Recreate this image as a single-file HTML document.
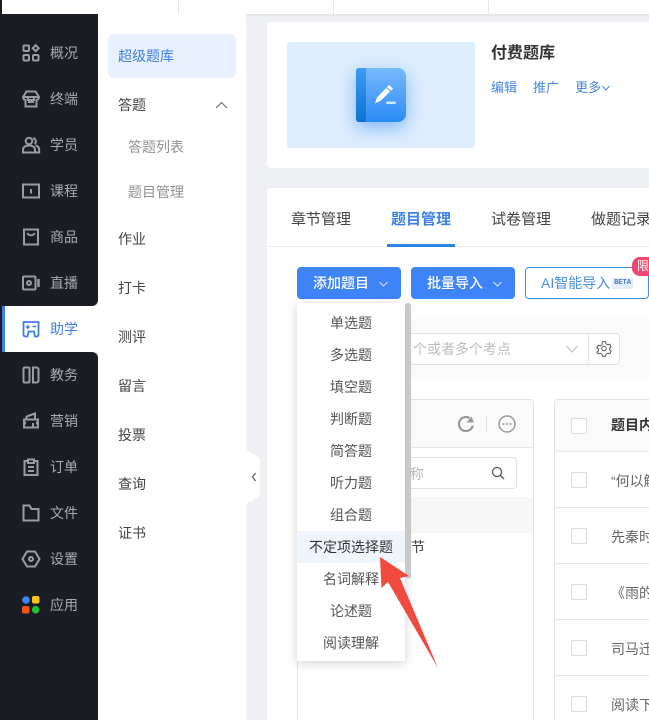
<!DOCTYPE html>
<html lang="zh-CN">
<head>
<meta charset="utf-8">
<title>题目管理</title>
<style>
*{box-sizing:border-box;margin:0;padding:0}
html,body{width:649px;height:720px;overflow:hidden;background:#eff0f3}
body{position:relative;font-family:"Liberation Sans","Noto Sans CJK SC",sans-serif;font-size:14px;color:#444}
.a{position:absolute}
.t{position:absolute;line-height:20px;height:20px;white-space:nowrap}
svg{position:absolute;overflow:visible}
.n{left:50px;color:#a9aaad;font-size:14px}
.ic{left:22px;width:18px;height:18px;fill:none;stroke:#9b9c9f;stroke-width:2}
.m{left:118px;color:#444}
.s{left:128px;color:#929292}
.dd{left:297px;width:108px;text-align:center;color:#555;font-size:14px}
.cb{position:absolute;left:571px;width:16px;height:16px;border:1px solid #dcdcdc;border-radius:2px;background:#fff}
.hl{position:absolute;left:555px;width:94px;height:1px;background:#e6e6e6}
.r{left:611px;color:#666;width:38px;overflow:hidden}
</style>
</head>
<body>
<!-- top bar -->
<div class="a" style="left:0;top:0;width:649px;height:14px;background:#fff;box-shadow:0 1px 3px rgba(0,0,0,.08)"></div>
<div class="a" style="left:178px;top:0;width:1px;height:14px;background:#e8e8e8"></div>
<div class="a" style="left:333px;top:0;width:1px;height:14px;background:#e8e8e8"></div>
<div class="a" style="left:488px;top:0;width:1px;height:14px;background:#e8e8e8"></div>

<!-- left strip and sidebar -->
<div class="a" style="left:0;top:0;width:2px;height:720px;background:#1b1d24"></div>
<div class="a" style="left:98px;top:14px;width:148px;height:706px;background:#fff"></div>
<div class="a" style="left:2px;top:14px;width:96px;height:292px;background:#1b1d24;border-bottom-right-radius:6px"></div>
<div class="a" style="left:2px;top:306px;width:96px;height:46px;background:#fff;border-left:3px solid #3f7fe8"></div>
<div class="a" style="left:2px;top:352px;width:96px;height:368px;background:#1b1d24;border-top-right-radius:6px"></div>

<!-- sidebar icons -->
<svg class="ic" style="top:44px" viewBox="0 0 18 18"><rect x="1.500" y="1.500" width="5.500" height="5.500" rx="1"/><rect x="1.500" y="11" width="5.500" height="5.500" rx="1"/><rect x="11" y="11" width="5.500" height="5.500" rx="1"/><path d="M13.700 1.200l3 3-3 3-3-3z"/></svg>
<svg class="ic" style="top:90px" viewBox="0 0 18 18"><path d="M4.500 1.500h9L17 7c0 2-1.500 3-2.500 3v6.500h-11V10C2.500 10 1 9 1 7zM1.500 7h15M6 12h6M6 7v3h6V7"/></svg>
<svg class="ic" style="top:136px" viewBox="0 0 18 18"><circle cx="7" cy="5" r="3.300"/><path d="M11 2.200a3.200 3.200 0 0 1 1.500 5.800M1 16.500v-2.500c0-3 2.500-4.500 6-4.500s6 1.500 6 4.500v2.500zM13.500 9.500c2.300.5 3.700 2 3.700 4v3H13"/></svg>
<svg class="ic" style="top:182px" viewBox="0 0 18 18"><path d="M1 2.500h16v13H1zM9 7v4.500"/></svg>
<svg class="ic" style="top:228px" viewBox="0 0 18 18"><path d="M2 1.500h14v15H2zM5.500 5c.5 3 6.500 3 7 0"/></svg>
<svg class="ic" style="top:274px" viewBox="0 0 18 18"><rect x="1" y="2.500" width="12.500" height="13" rx="1"/><circle cx="7" cy="9" r="2"/><path d="M16.500 5v8" stroke-width="2.500"/></svg>
<svg class="ic" style="top:320px;stroke:#3f7fe8" viewBox="0 0 18 18"><path d="M1.500 2h15v12.500q0 2-2 2h-1.500l-1-5H6.500l-1 5H4q-2.500 0-2.500-2z" stroke-width="1.800"/><path d="M3.800 7h4M5.800 5v4M10.500 6.500h3.500" stroke-width="1.500"/></svg>
<svg class="ic" style="top:366px" viewBox="0 0 18 18"><rect x="1.500" y="1.500" width="6" height="15" rx="1"/><path d="M11 1.500h3.500c1.200 0 2 .8 2 2v11c0 1.200-.8 2-2 2H11z"/></svg>
<svg class="ic" style="top:412px" viewBox="0 0 18 18"><path d="M2 7.500h14v2.500c-1.500 0-1.500 2 0 2v3.500H2V12c1.500 0 1.500-2 0-2zM4 7.500c0-2 .5-3 2-3.500L13 1.500V7.500M11 11v4.500"/></svg>
<svg class="ic" style="top:458px" viewBox="0 0 18 18"><path d="M6 3H2.500v14h13V3H12M6 1.500h6v3.500H6zM6 9h6M6 13h6"/></svg>
<svg class="ic" style="top:504px" viewBox="0 0 18 18"><path d="M1.500 1.500h6l2 3.500h7v11.500h-15z"/></svg>
<svg class="ic" style="top:550px" viewBox="0 0 18 18"><path d="M5 1.500h8L17.500 9 13 16.500H5L.5 9z"/><circle cx="9" cy="9" r="2"/></svg>
<svg style="left:22px;top:596px;width:18px;height:18px" viewBox="0 0 18 18"><circle cx="4" cy="4" r="3.800" fill="#3d84f7"/><rect x="10" y="0" width="7.500" height="7.500" rx="2" fill="#f9c513"/><rect x="0" y="10" width="7.500" height="7.500" rx="2" fill="#f4511e"/><circle cx="13.700" cy="13.700" r="3.800" fill="#1fc12e"/></svg>

<div class="t n" style="top:43px">概况</div>
<div class="t n" style="top:89px">终端</div>
<div class="t n" style="top:135px">学员</div>
<div class="t n" style="top:181px">课程</div>
<div class="t n" style="top:227px">商品</div>
<div class="t n" style="top:273px">直播</div>
<div class="t n" style="top:319px;color:#3f7fe8">助学</div>
<div class="t n" style="top:365px">教务</div>
<div class="t n" style="top:411px">营销</div>
<div class="t n" style="top:457px">订单</div>
<div class="t n" style="top:503px">文件</div>
<div class="t n" style="top:549px">设置</div>
<div class="t n" style="top:595px">应用</div>

<!-- secondary menu -->
<div class="a" style="left:108px;top:34px;width:128px;height:44px;background:#e9f1fe;border-radius:6px"></div>
<div class="t m" style="top:46px;color:#3f7fe8">超级题库</div>
<div class="t m" style="top:95px">答题</div>
<svg style="left:215px;top:101px;width:13px;height:8px" viewBox="0 0 13 8"><path d="M1 7l5.500-5.500L12 7" fill="none" stroke="#666" stroke-width="1"/></svg>
<div class="t s" style="top:137px">答题列表</div>
<div class="t s" style="top:182px">题目管理</div>
<div class="t m" style="top:229px">作业</div>
<div class="t m" style="top:278px">打卡</div>
<div class="t m" style="top:327px">测评</div>
<div class="t m" style="top:376px">留言</div>
<div class="t m" style="top:425px">投票</div>
<div class="t m" style="top:474px">查询</div>
<div class="t m" style="top:523px">证书</div>

<!-- collapse handle -->
<svg style="left:246px;top:450px;width:14px;height:54px" viewBox="0 0 14 54"><path d="M0 0L14 8V46L0 54z" fill="#fff"/><path d="M9.500 23l-3 4 3 4" fill="none" stroke="#666" stroke-width="1.300"/></svg>

<!-- card 1 -->
<div class="a" style="left:267px;top:22px;width:390px;height:146px;background:#fff;border-radius:4px"></div>
<div class="a" style="left:287px;top:42px;width:188px;height:106px;background:#deeeff;border-radius:3px"></div>
<div class="a" style="left:356px;top:68px;width:50px;height:54px;border-radius:3px 8px 8px 3px;background:linear-gradient(180deg,#79b9ff,#2a8cf5);box-shadow:0 6px 18px rgba(40,130,240,.5);overflow:hidden">
  <div class="a" style="left:0;top:0;width:10px;height:54px;background:linear-gradient(180deg,#3d9bf5,#0f72cf)"></div>
</div>
<svg style="left:375px;top:85px;width:22px;height:20px" viewBox="0 0 22 20"><path d="M14 0l4 3.500L6 15.500l-6 3 2-6z" fill="#fff"/><path d="M11.500 2.500l4 3.500" stroke="#4c9df8" stroke-width="1"/><rect x="11" y="16.500" width="10" height="2.500" rx="1.200" fill="#cfe6ff"/></svg>
<div class="t" style="left:491px;top:44px;font-size:16px;font-weight:700;color:#333">付费题库</div>
<div class="t" style="left:491px;top:78px;font-size:13px;color:#4a86e0">编辑</div>
<div class="t" style="left:533px;top:78px;font-size:13px;color:#4a86e0">推广</div>
<div class="t" style="left:575px;top:78px;font-size:13px;color:#4a86e0">更多</div>
<svg style="left:602px;top:85px;width:8px;height:6px" viewBox="0 0 8 6"><path d="M.5 1l3.500 4L7.500 1" fill="none" stroke="#4a86e0" stroke-width="1"/></svg>

<!-- card 2 -->
<div class="a" style="left:267px;top:188px;width:390px;height:540px;background:#fff;border-radius:4px"></div>
<div class="t" style="left:291px;top:210px;font-size:15px;color:#444">章节管理</div>
<div class="t" style="left:391px;top:210px;font-size:15px;color:#3f7fe8;font-weight:700">题目管理</div>
<div class="t" style="left:491px;top:210px;font-size:15px;color:#444">试卷管理</div>
<div class="t" style="left:591px;top:210px;font-size:15px;color:#444">做题记录</div>
<div class="a" style="left:267px;top:246px;width:382px;height:1px;background:#ececec"></div>
<div class="a" style="left:387px;top:244px;width:68px;height:3px;background:#2b85e4"></div>

<!-- buttons -->
<div class="a" style="left:297px;top:267px;width:104px;height:32px;background:#3f83f8;border-radius:4px"></div>
<div class="t" style="left:313px;top:273px;color:#fff;font-weight:500">添加题目</div>
<svg style="left:379px;top:281px;width:9px;height:6px" viewBox="0 0 9 6"><path d="M.5 1L4.500 5 8.500 1" fill="none" stroke="#d5e4fe" stroke-width="1"/></svg>
<div class="a" style="left:411px;top:267px;width:104px;height:32px;background:#3f83f8;border-radius:4px"></div>
<div class="t" style="left:427px;top:273px;color:#fff;font-weight:500">批量导入</div>
<svg style="left:493px;top:281px;width:9px;height:6px" viewBox="0 0 9 6"><path d="M.5 1L4.500 5 8.500 1" fill="none" stroke="#d5e4fe" stroke-width="1"/></svg>
<div class="a" style="left:525px;top:267px;width:124px;height:32px;background:#fff;border:1px solid #3f8fe0;border-radius:4px"></div>
<div class="t" style="left:541px;top:273px;color:#4a8fe0">AI智能导入</div>
<div class="a" style="left:612px;top:278px;width:21px;height:11px;background:#e3edfb;color:#4a80c0;font-size:7px;font-weight:700;line-height:11px;text-align:center;font-family:'Liberation Mono',monospace">BETA</div>
<div class="a" style="left:632px;top:257px;width:30px;height:19px;background:#f0476e;border-radius:8px 8px 0 8px;color:#fff;font-size:12px;line-height:19px;padding-left:5px;white-space:nowrap">限时</div>

<!-- filter -->
<div class="a" style="left:297px;top:319px;width:352px;height:59px;background:#fafafa"></div>
<div class="a" style="left:380px;top:333px;width:209px;height:32px;background:#fff;border:1px solid #e2e2e2"></div>
<div class="t" style="left:413px;top:339px;color:#bdbdbd">个或者多个考点</div>
<svg style="left:566px;top:345px;width:12px;height:8px" viewBox="0 0 12 8"><path d="M.5 1L6 7l5.500-6" fill="none" stroke="#bbb" stroke-width="1"/></svg>
<div class="a" style="left:588px;top:333px;width:32px;height:32px;background:#fff;border:1px solid #e2e2e2;border-radius:0 4px 4px 0"></div>
<svg style="left:597px;top:341px;width:14px;height:15px" viewBox="0 0 14 15"><path d="M5.500.8h3l.5 2 1.800 1 2-.6 1.300 2.600-1.500 1.400v1.600l1.500 1.400-1.300 2.600-2-.6-1.800 1-.5 2h-3l-.5-2-1.800-1-2 .6L-.1 11.200 1.400 9.800V8.200L-.1 6.800 1.200 4.200l2 .6 1.800-1z" fill="none" stroke="#555" stroke-width="1"/><circle cx="7" cy="7.500" r="2.200" fill="none" stroke="#555" stroke-width="1"/></svg>

<!-- tree panel -->
<div class="a" style="left:297px;top:399px;width:237px;height:330px;background:#fff;border:1px solid #e2e2e2;border-radius:4px"></div>
<div class="a" style="left:298px;top:400px;width:235px;height:48px;background:#fafafa;border-bottom:1px solid #e6e6e6;border-radius:4px 4px 0 0"></div>
<svg style="left:458px;top:416px;width:16px;height:16px" viewBox="0 0 16 16"><path d="M14.800 9.500A7 7 0 1 1 11.500 2" fill="none" stroke="#999" stroke-width="2.200"/><path d="M8.500 6.500h7.500L13.500 .5z" fill="#999"/></svg>
<div class="a" style="left:486px;top:416px;width:1px;height:16px;background:#ddd"></div>
<svg style="left:498px;top:415px;width:18px;height:18px" viewBox="0 0 18 18"><circle cx="9" cy="9" r="8" fill="none" stroke="#999" stroke-width="1.500"/><circle cx="5.500" cy="9" r="1" fill="#999"/><circle cx="9" cy="9" r="1" fill="#999"/><circle cx="12.500" cy="9" r="1" fill="#999"/></svg>
<div class="a" style="left:380px;top:457px;width:137px;height:32px;background:#fff;border:1px solid #e2e2e2;border-radius:4px"></div>
<div class="t" style="left:410px;top:464px;color:#bdbdbd">称</div>
<svg style="left:491px;top:466px;width:14px;height:14px" viewBox="0 0 14 14"><circle cx="6" cy="6" r="4.500" fill="none" stroke="#555" stroke-width="1.300"/><path d="M9.500 9.500l3.500 3.500" stroke="#555" stroke-width="1.300"/></svg>
<div class="a" style="left:298px;top:497px;width:235px;height:36px;background:#f7f7f7"></div>
<div class="t" style="left:411px;top:537px;color:#444">节</div>

<!-- table -->
<div class="a" style="left:554px;top:399px;width:110px;height:330px;background:#fff;border:1px solid #e2e2e2;border-radius:4px"></div>
<div class="a" style="left:555px;top:400px;width:94px;height:51px;background:#fafafa;border-radius:4px 0 0 0"></div>
<div class="hl" style="top:451px"></div><div class="hl" style="top:507px"></div><div class="hl" style="top:563px"></div><div class="hl" style="top:619px"></div><div class="hl" style="top:675px"></div>
<div class="cb" style="top:418px"></div><div class="cb" style="top:472px"></div><div class="cb" style="top:528px"></div><div class="cb" style="top:584px"></div><div class="cb" style="top:640px"></div><div class="cb" style="top:696px"></div>
<div class="t r" style="top:415px;font-weight:700;color:#333">题目内容</div>
<div class="t r" style="top:471px">“何以解忧</div>
<div class="t r" style="top:527px">先秦时期</div>
<div class="t r" style="top:583px">《雨的四季</div>
<div class="t r" style="top:639px">司马迁是</div>
<div class="t r" style="top:695px">阅读下面</div>

<!-- dropdown -->
<div class="a" style="left:297px;top:303px;width:108px;height:358px;background:#fff;box-shadow:0 2px 10px rgba(0,0,0,.18)"></div>
<div class="a" style="left:405px;top:303px;width:6px;height:275px;background:#c9c9c9;border-radius:3px 3px 0 0"></div>
<div class="a" style="left:297px;top:531px;width:108px;height:32px;background:#f0f5fd"></div>
<div class="t dd" style="top:313px">单选题</div>
<div class="t dd" style="top:345px">多选题</div>
<div class="t dd" style="top:377px">填空题</div>
<div class="t dd" style="top:409px">判断题</div>
<div class="t dd" style="top:441px">简答题</div>
<div class="t dd" style="top:473px">听力题</div>
<div class="t dd" style="top:505px">组合题</div>
<div class="t dd" style="top:537px;color:#333">不定项选择题</div>
<div class="t dd" style="top:569px">名词解释</div>
<div class="t dd" style="top:601px">论述题</div>
<div class="t dd" style="top:633px">阅读理解</div>

<!-- red arrow -->
<svg style="left:0;top:0;width:649px;height:720px" viewBox="0 0 649 720"><path d="M380 557L409 576 400 578 438 668 388 582 381.500 588z" fill="#f04a3e"/></svg>
</body>
</html>
